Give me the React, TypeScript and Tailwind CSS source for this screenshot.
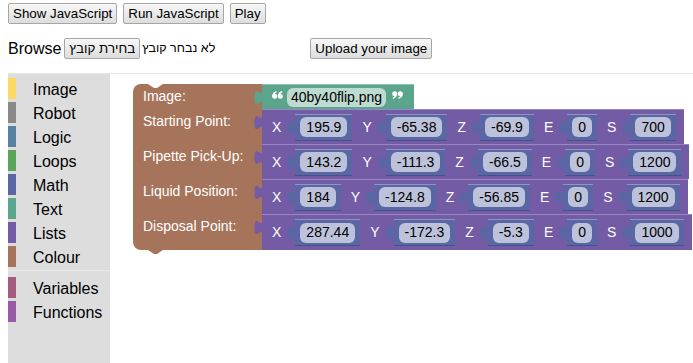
import React from "react";

const btn =
  "h-[21px] rounded-[2px] border border-[#a6a6a6] bg-linear-to-b from-[#f7f7f7] to-[#dddddd] px-[4px] text-[13.33px] leading-[19px] text-black";

function Tab({ fill, stroke }: { fill: string; stroke?: string }) {
  return (
    <svg
      className="absolute left-[-8px] top-[5px]"
      width="9"
      height="15"
      viewBox="0 0 9 15"
    >
      <path
        d="M8.5 0 C8.5 10 0.5 -8 0.5 7.5 S8.5 5 8.5 15 Z"
        fill={fill}
        stroke={stroke ?? "none"}
        strokeWidth="0.8"
      />
    </svg>
  );
}

function Num({ v }: { v: string }) {
  return (
    <div className="relative ml-[14px] flex h-[27px] items-center border-t border-b border-t-[#8d95c4] border-b-[#46508a] bg-[#5b67a5] px-[5px]">
      <Tab fill="#5b67a5" />
      <div className="flex h-[20px] items-center rounded-[6px] bg-[#bdc2db] px-[6px] text-[14px] text-black">
        {v}
      </div>
    </div>
  );
}

const LBL = ["X", "Y", "Z", "E", "S"];

function PurpleRow({ vals, h }: { vals: string[]; h: string }) {
  return (
    <div
      className={`relative flex items-center border-t border-t-[#9887c0] bg-[#745ba5] pl-[10px] pr-[8px] ${h}`}
    >
      <Tab fill="#745ba5" />
      {vals.map((v, i) => (
        <React.Fragment key={i}>
          <span className={`text-[14px] text-white ${i === 0 ? "" : "ml-[10px]"}`}>
            {LBL[i]}
          </span>
          <Num v={v} />
        </React.Fragment>
      ))}
    </div>
  );
}

function QuoteMark({ open }: { open: boolean }) {
  const mark = (
    <>
      <circle cx="2.7" cy="5.3" r="2.5" />
      <path d="M0.2 5.4 C0.2 2.6 1.8 0.8 4.4 0.1 L4.8 1.2 C3.3 1.9 2.5 3 2.6 4 Z" />
    </>
  );
  return (
    <svg width="11" height="8" viewBox="0 0 11 8" className="mb-[5px] shrink-0">
      <g fill="#ffffff" transform={open ? undefined : "rotate(180 5.5 4)"}>
        <g>{mark}</g>
        <g transform="translate(5.6 0)">{mark}</g>
      </g>
    </svg>
  );
}

function GreenBlock() {
  return (
    <div className="relative flex h-[25px] items-center border-t border-t-[#8cc4b1] bg-[#5ba58c] pl-[10px] pr-[11px]">
      <Tab fill="#5ba58c" />
      <QuoteMark open />
      <div className="ml-[4px] flex h-[19px] items-center rounded-[6px] bg-[#bddbd1] px-[4px] text-[14px] text-black">
        40by40flip.png
      </div>
      <span className="ml-[6px] flex">
        <QuoteMark open={false} />
      </span>
    </div>
  );
}

const brownCell = "w-[129px] shrink-0 bg-[#a5745b] pl-[10px] text-[14px] text-white";

const rows: { label: string; vals: string[]; h: string }[] = [
  { label: "Starting Point:", vals: ["195.9", "-65.38", "-69.9", "0", "700"], h: "h-[35px]" },
  { label: "Pipette Pick-Up:", vals: ["143.2", "-111.3", "-66.5", "0", "1200"], h: "h-[35px]" },
  { label: "Liquid Position:", vals: ["184", "-124.8", "-56.85", "0", "1200"], h: "h-[35px]" },
  { label: "Disposal Point:", vals: ["287.44", "-172.3", "-5.3", "0", "1000"], h: "h-[36px]" },
];

const toolbox: { name: string; cls: string }[] = [
  { name: "Image", cls: "border-[#ffd966]" },
  { name: "Robot", cls: "border-[#8a8888]" },
  { name: "Logic", cls: "border-[#5b80a5]" },
  { name: "Loops", cls: "border-[#5ba55b]" },
  { name: "Math", cls: "border-[#5b67a5]" },
  { name: "Text", cls: "border-[#5ba58c]" },
  { name: "Lists", cls: "border-[#745ba5]" },
  { name: "Colour", cls: "border-[#a5745b]" },
];
const toolbox2: { name: string; cls: string }[] = [
  { name: "Variables", cls: "border-[#a55b80]" },
  { name: "Functions", cls: "border-[#995ba5]" },
];

function TreeRow({ name, cls }: { name: string; cls: string }) {
  return (
    <div
      className={`mb-[3px] h-[21px] border-l-[8px] pl-[17px] text-[16px] leading-[24px] text-black ${cls}`}
    >
      {name}
    </div>
  );
}

export default function App() {
  return (
    <div className="h-[363px] w-[693px] overflow-hidden bg-white font-['Liberation_Sans','DejaVu_Sans',sans-serif] text-black">
      <div className="flex gap-[6px] pl-[8px] pt-[3px]">
        <button className={btn}>Show JavaScript</button>
        <button className={btn}>Run JavaScript</button>
        <button className={btn}>Play</button>
      </div>
      <div className="mt-[14px] flex h-[21px] items-center pl-[8px]">
        <span className="text-[16px]">Browse</span>
        <div className="ml-[3px] flex w-[242px] items-center">
          <button className={`${btn} h-[20px] px-[3px]`}>בחירת קובץ</button>
          <span className="ml-[2px] text-[12.5px]">לא נבחר קובץ</span>
        </div>
        <button className={`${btn} ml-[4px]`}>Upload your image</button>
      </div>
      <div className="ml-[8px] mt-[14px] h-px bg-[#e6e6e6]" />
      <div className="ml-[8px] flex h-[289px]">
        <div className="w-[102px] shrink-0 bg-[#dddddd] pt-[4px]">
          {toolbox.map((t) => (
            <TreeRow key={t.name} {...t} />
          ))}
          <div className="mb-[6px] h-px bg-[#e9e9e9]" />
          {toolbox2.map((t) => (
            <TreeRow key={t.name} {...t} />
          ))}
        </div>
        <div className="relative flex-1 bg-white">
          <div className="relative ml-[23px] mt-[10px] flex w-max flex-col items-start">
            <div className="flex">
              <div className={`${brownCell} rounded-tl-[8px] leading-[25px]`}>Image:</div>
              <GreenBlock />
            </div>
            {rows.map((r, i) => (
              <div className="flex" key={r.label}>
                <div
                  className={`${brownCell} leading-[24px] ${i === rows.length - 1 ? "rounded-bl-[8px]" : ""}`}
                >
                  {r.label}
                </div>
                <PurpleRow vals={r.vals} h={r.h} />
              </div>
            ))}
            <svg className="absolute left-[15px] top-0" width="15" height="4" viewBox="0 0 15 4">
              <path d="M0 0 L6 4 L9 4 L15 0 Z" fill="#ffffff" />
            </svg>
            <svg className="absolute bottom-[-4px] left-[15px]" width="15" height="4" viewBox="0 0 15 4">
              <path d="M0 0 L6 4 L9 4 L15 0 Z" fill="#a5745b" />
            </svg>
          </div>
        </div>
      </div>
    </div>
  );
}
